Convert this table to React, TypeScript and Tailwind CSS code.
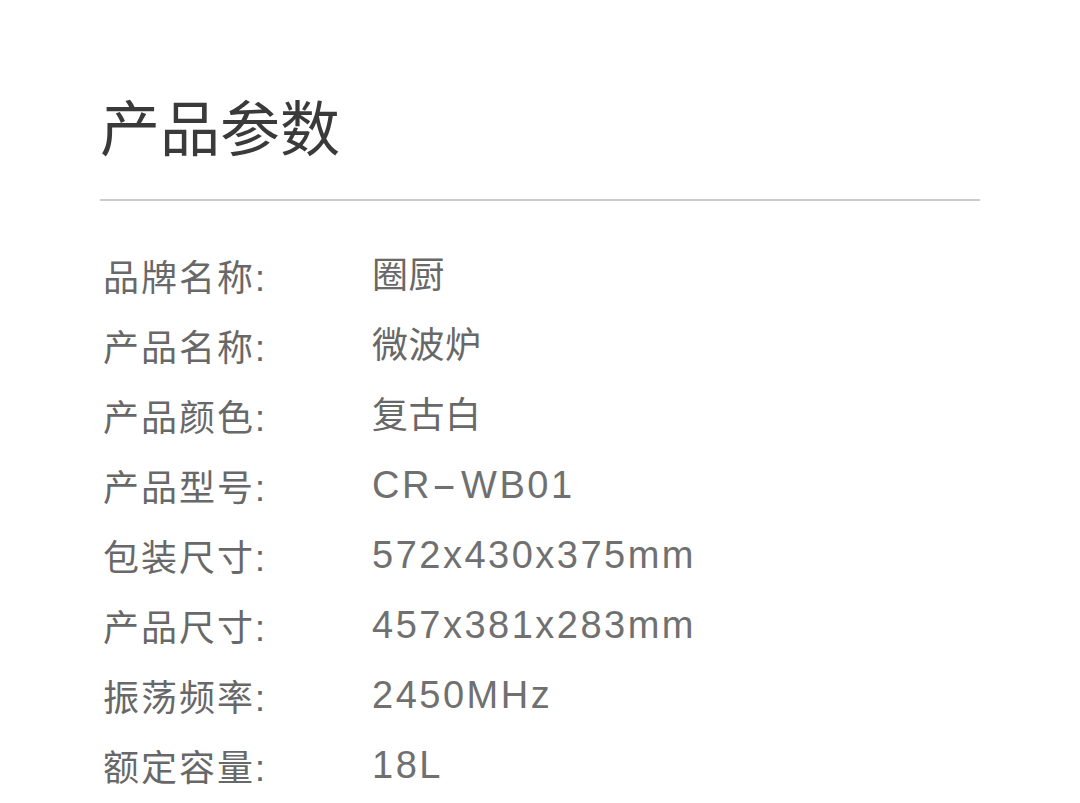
const specs = [
  { label: "品牌名称:", value: "圈厨" },
  { label: "产品名称:", value: "微波炉" },
  { label: "产品颜色:", value: "复古白" },
  { label: "产品型号:", value: "CR-WB01" },
  { label: "包装尺寸:", value: "572x430x375mm" },
  { label: "产品尺寸:", value: "457x381x283mm" },
  { label: "振荡频率:", value: "2450MHz" },
  { label: "额定容量:", value: "18L" },
];

const isCjk = (s: string) => /[\u4e00-\u9fff]/.test(s);

function Value({ text }: { text: string }) {
  if (isCjk(text)) {
    return <span className="text-[36px] tracking-[0.5px]">{text}</span>;
  }
  // the model number uses a long dash in the original type
  const parts = text.split("-");
  return (
    <span className="text-[38px] tracking-[2.5px] text-[#707070]">
      {parts.map((p, i) => (
        <span key={i}>
          {i > 0 && (
            <span className="inline-block mx-[7px] scale-x-200">-</span>
          )}
          {p}
        </span>
      ))}
    </span>
  );
}

export default function App() {
  return (
    <div
      className="min-h-screen bg-white pl-[100px] pt-[101px] text-[#333]"
      style={{ fontFamily: '"Liberation Sans", "Noto Sans CJK SC", sans-serif' }}
    >
      <h1 className="text-[60px] leading-[60px] font-normal text-[#3a3a3a]">
        产品参数
      </h1>
      <div className="mt-[38px] h-[2px] w-[880px] bg-[#cacaca]" />

      <dl className="mt-[43px] pl-[3px] text-[#686868]">
        {specs.map(({ label, value }) => (
          <div key={label} className="flex h-[70px] items-center">
            <dt className="w-[269px] text-[36px] tracking-[2px] leading-[70px]">
              {label}
            </dt>
            <dd className="leading-[70px]">
              <Value text={value} />
            </dd>
          </div>
        ))}
      </dl>
    </div>
  );
}
